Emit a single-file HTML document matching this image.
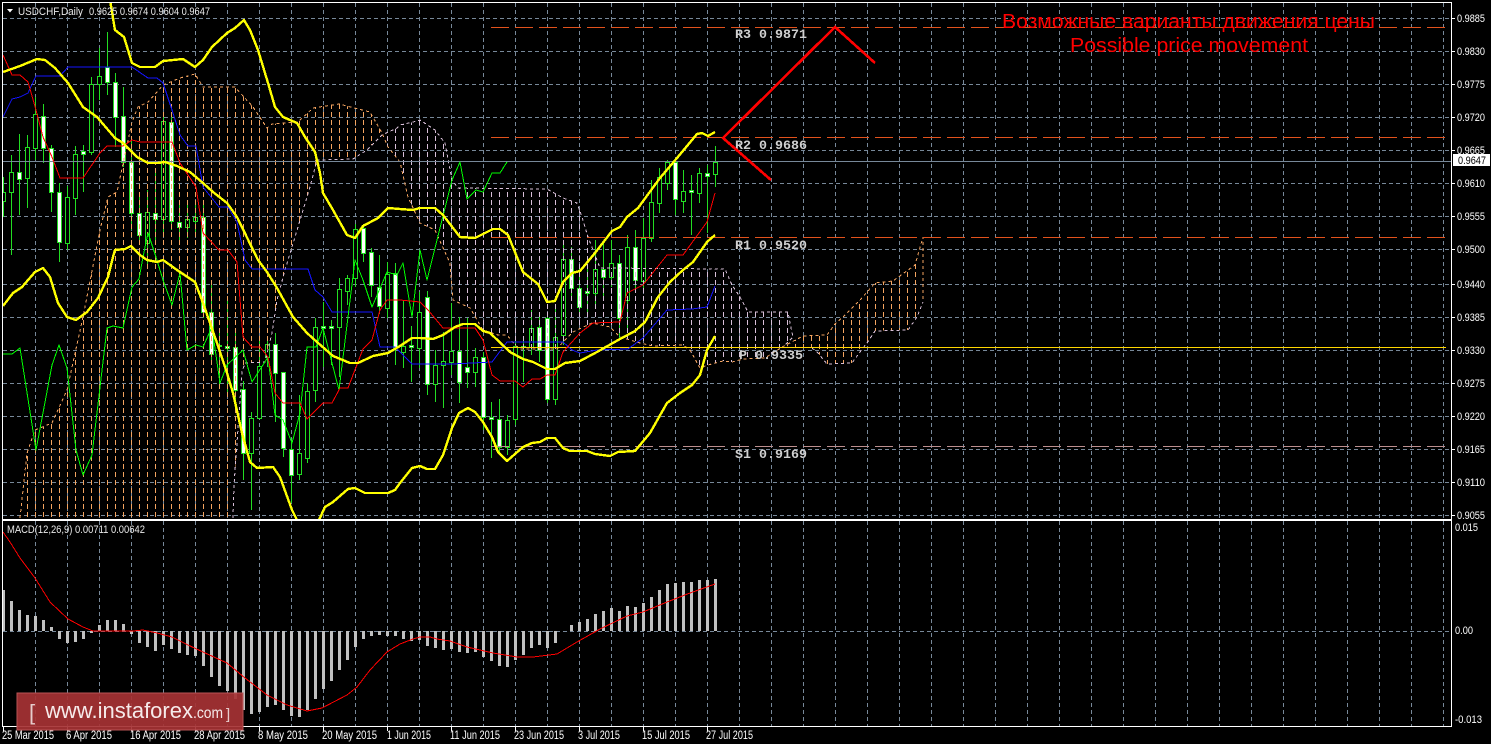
<!DOCTYPE html>
<html><head><meta charset="utf-8"><title>USDCHF Daily</title>
<style>
html,body{margin:0;padding:0;background:#000;width:1491px;height:744px;overflow:hidden}
svg{display:block}
text{font-family:"Liberation Sans",sans-serif}
.ax{font-size:11px;fill:#fff}
.dt{font-size:11.5px;fill:#fff}
.lv{font-family:"Liberation Mono",monospace;font-size:13.33px;font-weight:bold;fill:#cfcfcf}
.rd{font-size:20px;fill:#f00}
</style></head><body>
<svg width="1491" height="744" viewBox="0 0 1491 744" xmlns="http://www.w3.org/2000/svg">
<defs>
<clipPath id="m"><rect x="3" y="3" width="1448" height="516"/></clipPath>
<clipPath id="s"><rect x="3" y="521" width="1448" height="205"/></clipPath>
<pattern id="pa" patternUnits="userSpaceOnUse" width="8" height="8"><rect x="3" y="0" width="1" height="5" fill="#f4a460"/></pattern>
<pattern id="pb" patternUnits="userSpaceOnUse" width="8" height="8"><rect x="3" y="0" width="1" height="5" fill="#d8bfd8"/></pattern>
</defs>
<rect width="1491" height="744" fill="#000"/>

<!-- grid -->
<g shape-rendering="crispEdges" stroke="#778899" fill="none" stroke-dasharray="4 3">
<path d="M35.5 3V726M67.5 3V726M99.5 3V726M131.5 3V726M163.5 3V726M195.5 3V726M227.5 3V726M259.5 3V726M291.5 3V726M323.5 3V726M355.5 3V726M387.5 3V726M419.5 3V726M451.5 3V726M483.5 3V726M515.5 3V726M547.5 3V726M579.5 3V726M611.5 3V726M643.5 3V726M675.5 3V726M707.5 3V726M739.5 3V726M771.5 3V726M803.5 3V726M835.5 3V726M867.5 3V726M899.5 3V726M931.5 3V726M963.5 3V726M995.5 3V726M1027.5 3V726M1059.5 3V726M1091.5 3V726M1123.5 3V726M1155.5 3V726M1187.5 3V726M1219.5 3V726M1251.5 3V726M1283.5 3V726M1315.5 3V726M1347.5 3V726M1379.5 3V726M1411.5 3V726M1443.5 3V726"/>
<path d="M3 18.5H1451M3 51.5H1451M3 84.5H1451M3 117.5H1451M3 150.5H1451M3 183.5H1451M3 216.5H1451M3 249.5H1451M3 284.5H1451M3 317.5H1451M3 350.5H1451M3 383.5H1451M3 416.5H1451M3 449.5H1451M3 482.5H1451M3 515.5H1451M3 631.5H1451"/>
</g>

<!-- candles -->
<g clip-path="url(#m)" shape-rendering="crispEdges">
<path fill="none" stroke="#22dd22" d="M3.5 177V217M11.5 155V255M19.5 134V215M27.5 135V208M35.5 97V160M43.5 104V163M51.5 145V212M59.5 183V262M67.5 186V250M75.5 146V215M83.5 145V192M91.5 77V155M99.5 48V100M107.5 32V95M115.5 73V147M123.5 87V167M131.5 140V230M139.5 195V243M147.5 190V265M155.5 172V240M163.5 112V233M171.5 113V230M179.5 205V240M187.5 200V238M195.5 203V233M203.5 205V318M211.5 282V362M219.5 333V385M227.5 300V393M235.5 330V410M243.5 381V480M251.5 412V510M259.5 340V418M267.5 336V367M275.5 333V422M283.5 372V457M291.5 442V503M299.5 395V480M307.5 383V463M315.5 318V402M323.5 302V367M331.5 320V365M339.5 278V377M347.5 275V305M355.5 224V287M363.5 224V262M371.5 248V297M379.5 255V314M387.5 262V318M395.5 263V365M403.5 300V368M411.5 326V382M419.5 292V368M427.5 291V395M435.5 350V402M443.5 332V408M451.5 303V375M459.5 317V403M467.5 318V388M475.5 348V387M483.5 352V430M491.5 402V458M499.5 399V455M507.5 415V455M515.5 340V425M523.5 338V382M531.5 310V355M539.5 317V362M547.5 312V403M555.5 308V405M563.5 245V345M571.5 247V297M579.5 268V317M587.5 268V313M595.5 240V308M603.5 243V300M611.5 240V287M619.5 255V338M627.5 235V328M635.5 230V290M643.5 218V290M651.5 180V242M659.5 168V213M667.5 160V190M675.5 160V215M683.5 170V213M691.5 175V235M699.5 168V203M707.5 165V233M715.5 146V187"/>
<!-- bull bodies -->
<path fill="#000" stroke="#22dd22" d="M1.5 192.5h4v9h-4zM9.5 172.5h4v20h-4zM25.5 147.5h4v31h-4zM33.5 114.5h4v34h-4zM65.5 197.5h4v46h-4zM73.5 154.5h4v44h-4zM89.5 84.5h4v68h-4zM97.5 76.5h4v8h-4zM145.5 212.5h4v31h-4zM161.5 121.5h4v98h-4zM185.5 219.5h4v8h-4zM193.5 217.5h4v4h-4zM249.5 418.5h4v35h-4zM257.5 366.5h4v52h-4zM265.5 344.5h4v13h-4zM297.5 453.5h4v21h-4zM305.5 391.5h4v67h-4zM313.5 327.5h4v63h-4zM337.5 289.5h4v38h-4zM345.5 278.5h4v13h-4zM353.5 229.5h4v49h-4zM385.5 274.5h4v34h-4zM401.5 346.5h4v6h-4zM417.5 312.5h4v36h-4zM433.5 365.5h4v19h-4zM441.5 361.5h4v4h-4zM449.5 351.5h4v11h-4zM473.5 357.5h4v15h-4zM505.5 420.5h4v27h-4zM513.5 346.5h4v73h-4zM529.5 328.5h4v19h-4zM553.5 337.5h4v62h-4zM561.5 259.5h4v76h-4zM593.5 269.5h4v24h-4zM609.5 263.5h4v14h-4zM625.5 247.5h4v53h-4zM641.5 238.5h4v43h-4zM649.5 202.5h4v36h-4zM657.5 177.5h4v26h-4zM665.5 162.5h4v21h-4zM681.5 191.5h4v10h-4zM697.5 173.5h4v20h-4zM713.5 162.5h4v12h-4z"/>
<!-- bear bodies -->
<path fill="#fff" stroke="#22dd22" d="M17.5 172.5h4v7h-4zM41.5 116.5h4v32h-4zM49.5 148.5h4v44h-4zM57.5 192.5h4v50h-4zM81.5 151.5h4v3h-4zM105.5 67.5h4v15h-4zM113.5 82.5h4v35h-4zM121.5 116.5h4v46h-4zM129.5 162.5h4v51h-4zM137.5 213.5h4v22h-4zM153.5 213.5h4v6h-4zM169.5 122.5h4v99h-4zM177.5 222.5h4v5h-4zM201.5 217.5h4v95h-4zM209.5 312.5h4v42h-4zM217.5 345.5h4v1h-4zM225.5 346.5h4v2h-4zM233.5 347.5h4v43h-4zM241.5 389.5h4v64h-4zM273.5 344.5h4v29h-4zM281.5 372.5h4v76h-4zM289.5 449.5h4v26h-4zM321.5 326.5h4v2h-4zM329.5 326.5h4v2h-4zM361.5 228.5h4v25h-4zM369.5 252.5h4v33h-4zM377.5 287.5h4v19h-4zM393.5 273.5h4v74h-4zM409.5 345.5h4v2h-4zM425.5 297.5h4v87h-4zM457.5 351.5h4v31h-4zM465.5 367.5h4v5h-4zM481.5 357.5h4v60h-4zM489.5 417.5h4v2h-4zM497.5 419.5h4v28h-4zM521.5 346.5h4v1h-4zM537.5 327.5h4v23h-4zM545.5 318.5h4v81h-4zM569.5 259.5h4v29h-4zM577.5 288.5h4v19h-4zM585.5 291.5h4v2h-4zM601.5 269.5h4v8h-4zM617.5 263.5h4v55h-4zM633.5 247.5h4v33h-4zM673.5 162.5h4v37h-4zM689.5 190.5h4v2h-4zM705.5 173.5h4v3h-4z"/>
</g>

<!-- kumo -->
<g clip-path="url(#m)" shape-rendering="crispEdges">
<polygon fill="url(#pa)" points="20,518 27,453 35,430 52,423 67,390 83,317 100,230 108,197 117,192 132,122 138,107 148,102 163,85 180,78 195,74 203,87 235,87 253,107 267,128 272,124 298,122 313,108 339,104 370,112 382,133 367,150 353,159 317,160 310,187 298,227 285,270 277,300 272,333 265,362 245,363 242,372 234,485 233,518"/>
<polygon fill="url(#pb)" points="382,135 397,128 400,125 413,122 420,120 435,130 445,143 452,180 458,188 547,189 563,198 577,203 582,217 588,237 597,260 600,268 725,269 732,285 740,297 748,312 788,312 790,323 793,337 784,346 765,358 743,359 732,362 723,361 708,365 700,368 690,350 683,345 653,346 640,343 620,337 610,327 592,323 573,332 563,342 557,349 520,349 515,345 507,335 498,335 483,330 470,308 453,300 450,263 435,230 420,223 408,197 400,162 388,147"/>
<polygon fill="url(#pa)" points="784,346 803,336 827,335 835,324 843,317 860,300 875,283 893,281 915,265 923,237 923,302 917,317 908,330 875,331 867,343 860,352 852,363 827,364 818,353 812,348"/>
<g fill="none" stroke-dasharray="3 3">
<polyline stroke="#f4a460" points="20,518 27,453 35,430 52,423 67,390 83,317 100,230 108,197 117,192 132,122 138,107 148,102 163,85 180,78 195,74 203,87 235,87 253,107 267,128 272,124 298,122 313,108 339,104 370,112 382,133 388,147 400,162 408,197 420,223 435,230 450,263 453,300 470,308 483,330 498,335 507,335 515,345 520,349 557,349 563,342 573,332 592,323 610,327 620,337 640,343 653,346 683,345 690,350 700,368 708,365 723,361 732,362 743,359 765,358 784,346 803,336 827,335 835,324 843,317 860,300 875,283 893,281 915,265 923,237 923,302"/>
<polyline stroke="#d8bfd8" points="233,518 234,485 242,372 245,363 265,362 272,333 277,300 285,270 298,227 310,187 317,160 353,159 367,150 382,135 397,128 400,125 413,122 420,120 435,130 445,143 452,180 458,188 547,189 563,198 577,203 582,217 588,237 597,260 600,268 725,269 732,285 740,297 748,312 788,312 790,323 793,337 784,346"/>
<polyline stroke="#d8bfd8" points="812,348 818,353 827,364 852,363 860,352 867,343 875,331 908,330 917,317 923,302"/>
</g>
</g>

<!-- levels -->
<g shape-rendering="crispEdges" fill="none">
<path stroke="#778899" d="M3 161.5H1451"/>
<g stroke-dasharray="18 6">
<path stroke="#e2521c" d="M491 27.5H1446M491 137.5H1446M491 237.5H1446"/>
<path stroke="#bc8f8f" d="M491 446.5H1446"/>
</g>
<path stroke="#ffd700" d="M491 347.5H1446"/>
</g>

<!-- ichimoku + bollinger -->
<g clip-path="url(#m)" shape-rendering="crispEdges" fill="none" stroke-linejoin="round">
<polyline stroke="#1414ff" points="3,117 12,99 20,97 28,93 36,76 60,76 68,67 132,67 148,78 157,78 163,83 172,110 180,135 188,146 196,146 203,187 219,207 228,207 237,222 245,260 252,269 308,269 315,290 323,297 332,312 372,312 380,347 395,347 400,352 412,364 452,364 492,362 507,342 563,342 572,350 580,353 597,350 628,349 643,338 667,310 692,309 707,307 715,286"/>
<polyline stroke="#00ff00" points="3,354 12,354 20,348 36,450 52,365 59,345 67,368 76,450 83,475 92,455 107,328 113,326 123,328 132,287 139,279 143,257 148,233 156,257 163,280 172,305 180,273 187,350 196,345 203,347 212,327 220,383 227,365 243,350 252,382 268,357 275,415 283,420 292,443 300,413 307,347 316,347 323,328 339,390 355,260 363,280 372,307 387,272 397,275 403,263 412,317 420,250 427,280 452,180 460,162 467,199 476,190 483,192 492,173 500,173 507,162"/>
<polyline stroke="#ff0000" points="3,55 12,75 20,75 28,82 36,110 43,137 52,157 60,178 83,178 100,153 107,146 123,146 132,140 140,142 172,142 180,163 196,187 203,233 219,250 228,250 237,262 243,337 252,347 260,347 268,357 275,393 283,403 300,403 307,419 323,403 332,403 340,388 348,388 363,349 372,340 380,310 387,300 400,300 420,302 428,310 443,328 475,328 483,340 492,375 500,381 515,381 523,387 532,379 540,379 547,375 555,375 563,352 580,333 593,323 620,322 627,293 643,285 667,255 683,255 707,222 715,193"/>
<g stroke="#ffff00" stroke-width="2.4">
<polyline points="110,0 113,18 115,30 124,37 132,63 140,67 155,67 163,61 183,59 195,67 203,60 212,47 227,33 235,28 244,20 250,30 258,50 268,83 275,107 283,117 297,123 305,137 315,152 320,173 323,193 333,210 347,235 355,238 363,226 378,218 388,208 400,209 413,210 420,208 435,208 443,215 460,237 475,238 493,229 500,229 508,235 523,272 538,284 547,302 555,301 563,282 572,273 580,271 595,253 612,231 620,227 627,217 638,208 660,178 677,158 697,134 702,133 708,136 715,132"/>
<polyline points="3,72 20,66 37,59 45,60 55,68 68,83 83,107 97,117 115,138 123,143 137,157 148,163 158,163 165,162 177,166 190,172 203,183 213,192 227,203 237,217 258,260 267,272 277,288 293,317 307,333 317,342 333,356 350,363 358,363 373,356 388,353 400,346 412,338 420,338 433,339 443,335 455,327 463,324 475,324 483,331 490,333 510,352 523,359 533,362 547,369 555,369 565,363 580,361 597,352 620,339 635,331 645,322 658,297 670,282 683,270 693,262 707,242 715,235"/>
<polyline points="3,306 13,293 22,287 35,272 43,268 50,277 58,303 67,317 76,320 87,312 98,298 108,277 113,257 115,250 125,249 131,246 140,255 147,260 157,262 163,260 177,270 195,282 203,303 217,343 227,373 233,393 242,433 250,462 257,468 273,467 280,477 292,510 297,520 319,520 325,507 333,502 348,489 355,488 365,493 388,493 395,490 400,483 412,468 420,466 427,469 435,469 443,455 452,428 459,413 468,408 475,412 483,422 492,437 498,452 507,461 523,447 532,443 540,442 547,438 555,438 563,448 570,451 587,451 595,454 610,456 618,452 635,451 650,433 667,403 680,393 692,385 700,375 707,350 715,336"/>
</g>
</g>

<!-- level labels -->
<text class="lv" x="735" y="38">R3 0.9871</text>
<text class="lv" x="735" y="149">R2 0.9686</text>
<text class="lv" x="735" y="249">R1 0.9520</text>
<text class="lv" x="739" y="359">P  0.9335</text>
<text class="lv" x="735" y="458">S1 0.9169</text>

<!-- arrows -->
<g fill="none" stroke="#f00" stroke-width="2.6" shape-rendering="crispEdges">
<polyline points="771,180 723,138 835,27 875,63"/>
</g>
<text class="rd" x="1002" y="28" textLength="373" lengthAdjust="spacingAndGlyphs">Возможные варианты движения цены</text>
<text class="rd" x="1070" y="52" textLength="238" lengthAdjust="spacingAndGlyphs">Possible price movement</text>

<!-- macd bars -->
<g clip-path="url(#s)" shape-rendering="crispEdges">
<path fill="none" stroke="#c0c0c0" stroke-width="3" d="M3.5 631V590M11.5 631V601M19.5 631V610M27.5 631V615M35.5 631V616M43.5 631V620M51.5 631V627M59.5 631V639M67.5 631V643M75.5 631V642M83.5 631V639M91.5 631V633M99.5 631V625M107.5 631V620M115.5 631V620M123.5 631V624M131.5 631V634M139.5 631V643M147.5 631V647M155.5 631V651M163.5 631V645M171.5 631V649M179.5 631V653M187.5 631V655M195.5 631V656M203.5 631V666M211.5 631V677M219.5 631V686M227.5 631V691M235.5 631V699M243.5 631V710M251.5 631V714M259.5 631V712M267.5 631V707M275.5 631V705M283.5 631V710M291.5 631V716M299.5 631V717M307.5 631V710M315.5 631V699M323.5 631V689M331.5 631V681M339.5 631V670M347.5 631V660M355.5 631V647M363.5 631V639M371.5 631V636M379.5 631V635M387.5 631V636M395.5 631V636M403.5 631V639M411.5 631V641M419.5 631V640M427.5 631V646M435.5 631V648M443.5 631V650M451.5 631V649M459.5 631V652M467.5 631V653M475.5 631V652M483.5 631V657M491.5 631V661M499.5 631V666M507.5 631V667M515.5 631V660M523.5 631V655M531.5 631V648M539.5 631V645M547.5 631V648M555.5 631V643M571.5 631V625M579.5 631V622M587.5 631V619M595.5 631V614M603.5 631V611M611.5 631V608M619.5 631V611M627.5 631V606M635.5 631V607M643.5 631V603M651.5 631V597M659.5 631V590M667.5 631V584M675.5 631V583M683.5 631V582M691.5 631V582M699.5 631V580M707.5 631V580M715.5 631V579"/>
<polyline fill="none" stroke="#f00" points="3,532 10,542 20,558 35,578 50,602 68,619 83,627 93,631 133,631 143,630 157,633 172,637 188,645 203,652 227,663 245,678 267,695 287,705 307,711 322,708 347,695 357,687 370,670 387,652 400,644 413,639 420,637 430,637 437,639 450,641 467,647 493,653 517,657 533,657 557,654 577,642 600,629 627,616 643,612 667,602 690,593 715,584"/>
</g>

<!-- frame -->
<g fill="#fff" shape-rendering="crispEdges">
<rect x="2" y="2" width="1450" height="1"/>
<rect x="2" y="2" width="1" height="725"/>
<rect x="1451" y="2" width="1" height="725"/>
<rect x="2" y="519" width="1450" height="2"/>
<rect x="2" y="726" width="1450" height="1"/>
<path d="M3 727h1v4h-1zM67 727h1v4h-1zM131 727h1v4h-1zM195 727h1v4h-1zM259 727h1v4h-1zM323 727h1v4h-1zM387 727h1v4h-1zM451 727h1v4h-1zM515 727h1v4h-1zM579 727h1v4h-1zM643 727h1v4h-1zM707 727h1v4h-1z"/>
<path d="M1452 18h3v1h-3zM1452 51h3v1h-3zM1452 84h3v1h-3zM1452 117h3v1h-3zM1452 150h3v1h-3zM1452 183h3v1h-3zM1452 216h3v1h-3zM1452 249h3v1h-3zM1452 284h3v1h-3zM1452 317h3v1h-3zM1452 350h3v1h-3zM1452 383h3v1h-3zM1452 416h3v1h-3zM1452 449h3v1h-3zM1452 482h3v1h-3zM1452 515h3v1h-3z"/>
</g>

<!-- title -->
<polygon points="7,9 13,9 10,12.5" fill="#fff"/>
<text x="18" y="15" class="ax" style="fill:#e8e8e8" textLength="65" lengthAdjust="spacingAndGlyphs">USDCHF,Daily</text>
<text x="89" y="15" class="ax" style="fill:#e8e8e8" textLength="121" lengthAdjust="spacingAndGlyphs">0.9625 0.9674 0.9604 0.9647</text>
<text x="7" y="533" class="ax" style="fill:#e8e8e8" textLength="138" lengthAdjust="spacingAndGlyphs">MACD(12,26,9) 0.00711 0.00642</text>

<!-- axis labels -->
<text class="ax" x="1457" y="22" textLength="28" lengthAdjust="spacingAndGlyphs">0.9885</text>
<text class="ax" x="1457" y="55" textLength="28" lengthAdjust="spacingAndGlyphs">0.9830</text>
<text class="ax" x="1457" y="88" textLength="28" lengthAdjust="spacingAndGlyphs">0.9775</text>
<text class="ax" x="1457" y="121" textLength="28" lengthAdjust="spacingAndGlyphs">0.9720</text>
<text class="ax" x="1457" y="154" textLength="28" lengthAdjust="spacingAndGlyphs">0.9665</text>
<text class="ax" x="1457" y="187" textLength="28" lengthAdjust="spacingAndGlyphs">0.9610</text>
<text class="ax" x="1457" y="220" textLength="28" lengthAdjust="spacingAndGlyphs">0.9555</text>
<text class="ax" x="1457" y="253" textLength="28" lengthAdjust="spacingAndGlyphs">0.9500</text>
<text class="ax" x="1457" y="288" textLength="28" lengthAdjust="spacingAndGlyphs">0.9440</text>
<text class="ax" x="1457" y="321" textLength="28" lengthAdjust="spacingAndGlyphs">0.9385</text>
<text class="ax" x="1457" y="354" textLength="28" lengthAdjust="spacingAndGlyphs">0.9330</text>
<text class="ax" x="1457" y="387" textLength="28" lengthAdjust="spacingAndGlyphs">0.9275</text>
<text class="ax" x="1457" y="420" textLength="28" lengthAdjust="spacingAndGlyphs">0.9220</text>
<text class="ax" x="1457" y="453" textLength="28" lengthAdjust="spacingAndGlyphs">0.9165</text>
<text class="ax" x="1457" y="486" textLength="28" lengthAdjust="spacingAndGlyphs">0.9110</text>
<text class="ax" x="1457" y="519" textLength="28" lengthAdjust="spacingAndGlyphs">0.9055</text>
<rect x="1453" y="154" width="37" height="12" fill="#fff" shape-rendering="crispEdges"/>
<text class="ax" x="1458" y="164" style="fill:#000" textLength="28" lengthAdjust="spacingAndGlyphs">0.9647</text>
<text class="ax" x="1455" y="531" textLength="23" lengthAdjust="spacingAndGlyphs">0.015</text>
<text class="ax" x="1455" y="634" textLength="18" lengthAdjust="spacingAndGlyphs">0.00</text>
<text class="ax" x="1455" y="723" textLength="27" lengthAdjust="spacingAndGlyphs">-0.013</text>

<!-- date labels -->
<text class="dt" x="2" y="739" textLength="52" lengthAdjust="spacingAndGlyphs">25 Mar 2015</text>
<text class="dt" x="66" y="739" textLength="46" lengthAdjust="spacingAndGlyphs">6 Apr 2015</text>
<text class="dt" x="130" y="739" textLength="51" lengthAdjust="spacingAndGlyphs">16 Apr 2015</text>
<text class="dt" x="194" y="739" textLength="51" lengthAdjust="spacingAndGlyphs">28 Apr 2015</text>
<text class="dt" x="258" y="739" textLength="50" lengthAdjust="spacingAndGlyphs">8 May 2015</text>
<text class="dt" x="322" y="739" textLength="55" lengthAdjust="spacingAndGlyphs">20 May 2015</text>
<text class="dt" x="387" y="739" textLength="44" lengthAdjust="spacingAndGlyphs">1 Jun 2015</text>
<text class="dt" x="450" y="739" textLength="50" lengthAdjust="spacingAndGlyphs">11 Jun 2015</text>
<text class="dt" x="514" y="739" textLength="50" lengthAdjust="spacingAndGlyphs">23 Jun 2015</text>
<text class="dt" x="578" y="739" textLength="42" lengthAdjust="spacingAndGlyphs">3 Jul 2015</text>
<text class="dt" x="642" y="739" textLength="48" lengthAdjust="spacingAndGlyphs">15 Jul 2015</text>
<text class="dt" x="706" y="739" textLength="47" lengthAdjust="spacingAndGlyphs">27 Jul 2015</text>

<!-- logo -->
<rect x="17" y="693" width="226" height="37" fill="#a63234" fill-opacity=".92" stroke="#b95355" stroke-width="1" shape-rendering="crispEdges"/>
<text x="29" y="720" style="font-size:22px" fill="#e6cccc">[</text>
<text x="45" y="718" style="font-size:22px" fill="#f6eaea" textLength="148" lengthAdjust="spacingAndGlyphs">www.instaforex</text>
<text x="193" y="718" style="font-size:16px" fill="#f6eaea" textLength="30" lengthAdjust="spacingAndGlyphs">.com</text>
<text x="226" y="719" style="font-size:15px" fill="#e6cccc">]</text>
</svg>
</body></html>
